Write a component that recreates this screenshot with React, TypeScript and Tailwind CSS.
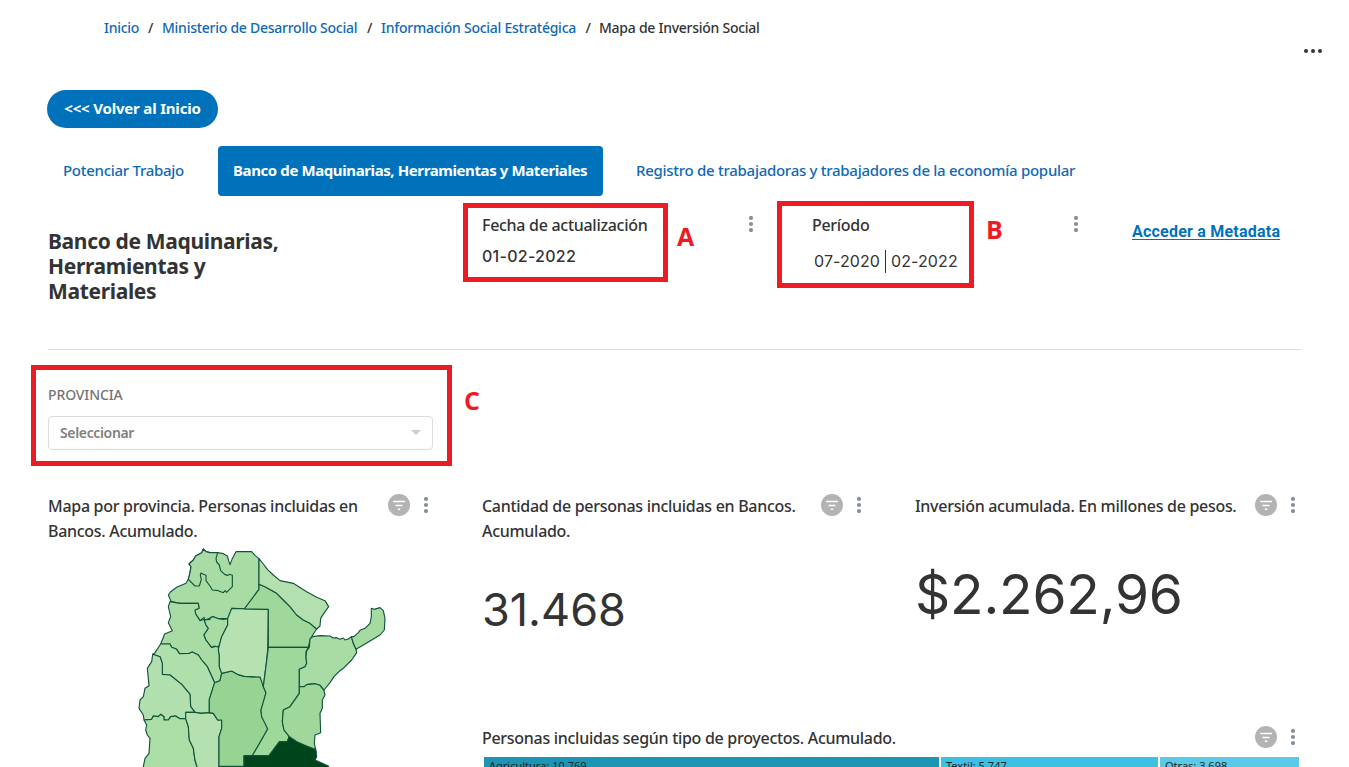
import React from "react";

const Kebab = ({ className = "" }: { className?: string }) => (
  <svg className={`w-[6px] h-4 shrink-0 ${className}`} viewBox="0 0 6 16" fill="#84919a">
    <circle cx="3" cy="2" r="2.1" />
    <circle cx="3" cy="8" r="2.1" />
    <circle cx="3" cy="14" r="2.1" />
  </svg>
);

const Filter = () => (
  <svg className="size-[22px] shrink-0" viewBox="0 0 22 22">
    <circle cx="11" cy="11" r="11" fill="#b3b3b3" />
    <path d="M5 7.5h12M7.5 11.5h7M9.8 15.2h2.4" stroke="#fff" strokeWidth="1.4" />
  </svg>
);

const Tools = () => (
  <div className="flex shrink-0 items-center gap-[13px] h-[22px]">
    <Filter />
    <Kebab />
  </div>
);

const provinces: { fill: string; d: string }[] = [
  { fill: "#a9dca4", d: "M175 118L168 130 140 142 122 155 115 165 119 175 124 185 150 190 205 190 207 205 195 210 197 222 210 242 222 232 225 240 250 230 265 236 293 236 305 205 343 207 387 148 387 56 375 46 365 35 318 35 306 58 300 74 296 62 292 48 280 41 263 38 240 38 228 35 220 27 215 38 197 48 190 60 177 72 183 80 180 98Z" },
  { fill: "#a9dca4", d: "M263 38L258 55 260 66 268 75 272 92 285 104 294 106 298 103 307 106 307 140 295 152 290 157 285 152 280 158 265 152 247 150 240 138 228 122 228 106 220 103 213 99 211 106 214 118 208 138 195 138 175 118 180 98 183 80 177 72 190 60 197 48 215 38 220 27 228 35 240 38Z" },
  { fill: "#a9dca4", d: "M120 185L115 200 122 230 115 248 127 272 104 282 92 312 120 312 125 322 140 328 148 341 178 340 187 336 205 345 215 360 232 380 254 428 270 422 275 400 268 380 268 345 265 330 268 316 245 322 228 300 222 285 235 265 228 255 222 238 210 242 197 222 195 210 207 205 205 190 150 190Z" },
  { fill: "#a9dca4", d: "M222 238L228 255 235 265 222 285 228 300 245 322 254 318 262 321 268 316 275 290 293 255 293 236 280 238 265 236 250 230 242 232 240 238 225 240Z" },
  { fill: "#afdfab", d: "M92 312L75 338 68 343 90 350 97 370 97 403 120 405 155 433 180 463 182 500 195 517 215 520 238 518 238 478 254 428 232 380 215 360 205 345 187 336 178 340 148 341 140 328 125 322 120 312Z" },
  { fill: "#b1dfad", d: "M68 343L65 365 52 385 57 437 45 445 40 470 30 480 27 505 40 525 42 540 65 538 70 528 85 530 92 523 102 530 102 540 115 540 122 530 137 528 150 536 167 536 167 517 195 517 182 500 180 463 155 433 120 405 97 403 97 370 90 350Z" },
  { fill: "#abdda7", d: "M42 540L50 555 47 570 52 585 60 595 57 640 45 655 38 690 204 690 195 660 190 625 178 600 175 560 167 536 150 536 137 528 122 530 115 540 102 540 102 530 92 523 85 530 70 528 65 538Z" },
  { fill: "#b5e1b0", d: "M167 517L195 517 215 520 238 518 250 520 263 540 275 540 275 565 267 590 267 690 204 690 195 660 190 625 178 600 175 560 167 536Z" },
  { fill: "#97d493", d: "M254 428L270 422 275 400 305 393 325 404 343 409 390 411 397 425 400 440 408 458 400 490 393 510 395 530 405 545 413 567 400 590 367 647 342 648 342 679 267 679 267 590 275 565 275 540 263 540 250 520 238 518 238 478Z" },
  { fill: "#b6e2b2", d: "M305 205L415 208 413 330 409 370 400 440 390 411 343 409 325 404 305 393 275 400 268 380 268 345 265 330 268 316 275 290 293 255 293 236Z" },
  { fill: "#9fd89a", d: "M387 133L405 140 440 160 460 180 480 200 500 225 520 240 540 250 560 267 548 285 540 300 535 322 415 322 415 208 343 207 387 148Z" },
  { fill: "#b3e0ae", d: "M387 56L400 72 412 88 430 105 450 122 490 130 530 155 560 172 585 182 596 200 585 215 572 235 570 258 560 267 540 250 520 240 500 225 480 200 460 180 440 160 405 140 387 133Z" },
  { fill: "#9fd89b", d: "M415 322L535 322 528 335 528 350 530 370 525 380 508 388 508 460 480 500 460 510 457 545 462 570 478 590 472 605 450 605 417 647 367 647 400 590 413 567 395 530 393 510 408 458 400 440 409 370Z" },
  { fill: "#a9dca4", d: "M548 290L570 287 600 288 610 294 620 293 630 298 640 294 645 300 655 297 664 290 670 310 678 328 680 338 665 360 640 385 630 392 612 410 600 428 582 450 570 436 555 431 530 434 523 440 508 440 508 388 525 380 530 370 528 350 530 333 538 322 540 297Z" },
  { fill: "#a5daa0", d: "M664 290L672 290 685 278 690 271 705 265 720 250 724 230 724 205 732 208 750 203 760 212 765 235 763 270 750 285 720 303 700 315 678 328 670 310Z" },
  { fill: "#9fd89a", d: "M508 440L523 440 530 434 555 431 570 436 582 452 585 465 577 480 577 505 570 520 572 578 555 585 553 610 557 628 530 620 500 605 478 590 462 570 457 545 460 510 480 500 508 460Z" },
  { fill: "#00441b", d: "M342 647L417 647 448 605 472 605 477 590 500 605 530 618 558 630 560 650 555 660 595 678 600 690 342 690Z" },
];

const ProvinceMap = () => (
  <svg className="ml-[82px] mt-[-4px] h-[227px] w-[262px] shrink-0" viewBox="0 0 786 681">
    <g stroke="#10543a" strokeWidth="3.4" strokeLinejoin="round">
      {provinces.map((p, i) => (
        <path key={i} d={p.d} fill={p.fill} />
      ))}
    </g>
  </svg>
);

const Title = ({ children }: { children: React.ReactNode }) => (
  <h2 className="text-[16px] leading-[25px] font-medium tracking-[-0.29px] whitespace-nowrap">{children}</h2>
);

const letter = "absolute font-['Open_Sans'] text-[25px] leading-[30px] font-bold text-[#ed1c24]";

export default function App() {
  return (
    <div className="relative flex h-[767px] w-[1349px] flex-col overflow-hidden bg-white font-['Noto_Sans','Open_Sans',sans-serif] text-[#333]">
      <nav className="flex h-[40px] shrink-0 pl-[104px] pt-[18px] text-[14px] leading-5 font-medium tracking-[-0.26px] text-[#0f69b4] whitespace-nowrap">
        <a className="w-[35px]">Inicio</a>
        <span className="w-[23px] text-center text-[#333]">/</span>
        <a className="w-[196px]">Ministerio de Desarrollo Social</a>
        <span className="w-[23px] text-center text-[#333]">/</span>
        <a className="w-[196px]">Información Social Estratégica</a>
        <span className="w-[22px] text-center text-[#333]">/</span>
        <span className="text-[#333]">Mapa de Inversión Social</span>
      </nav>
      <div className="flex h-[50px] shrink-0 justify-end pr-[26px] pt-[8px]">
        <svg className="h-[6px] w-[20px]" viewBox="0 0 20 6" fill="#333">
          <circle cx="3" cy="3" r="2" /><circle cx="10" cy="3" r="2" /><circle cx="17" cy="3" r="2" />
        </svg>
      </div>
      <button className="ml-[47px] h-[38px] w-[171px] shrink-0 rounded-full bg-[#0072bc] pb-[2px] text-[15px] font-bold tracking-[-0.18px] text-white whitespace-nowrap">&lt;&lt;&lt; Volver al Inicio</button>
      <div className="mt-[18px] flex h-[50px] shrink-0 items-stretch pl-[63px] text-[15px] leading-[48px] font-medium tracking-[-0.28px] text-[#0f69b4] whitespace-nowrap">
        <a className="w-[155px]">Potenciar Trabajo</a>
        <a className="w-[385px] rounded bg-[#0072bc] pl-[15px] font-bold tracking-[-0.4px] text-white">Banco de Maquinarias, Herramientas y Materiales</a>
        <a className="pl-[33px]">Registro de trabajadoras y trabajadores de la economía popular</a>
      </div>
      <header className="mx-[48px] flex h-[154px] shrink-0 border-b border-[#ddd] pt-[17px]">
        <h1 className="w-[434px] pt-[16px] text-[21px] leading-[25px] font-bold tracking-[-0.34px] whitespace-nowrap">
          Banco de Maquinarias,<br />Herramientas y<br />Materiales
        </h1>
        <div className="w-[266px]">
          <Title>Fecha de actualización</Title>
          <div className="mt-[6px] font-['Inter'] text-[16px] leading-[25px] font-medium tracking-[0.27px]">01-02-2022</div>
        </div>
        <Kebab className="mt-[3px]" />
        <div className="ml-[58px] w-[261px]">
          <Title>Período</Title>
          <div className="mt-[11px] flex h-6 items-center gap-[5px] pl-[2px] font-['Inter'] text-[16px] tracking-[0.1px]">
            <span className="w-[66px] whitespace-nowrap">07-2020</span>
            <span className="h-[23px] w-px bg-[#333]" />
            <span>02-2022</span>
          </div>
        </div>
        <Kebab className="mt-[3px]" />
        <a className="ml-[53px] mt-[6px] font-['Roboto'] text-[16px] leading-[25px] font-bold tracking-[0.22px] text-[#0072bc] underline underline-offset-2 whitespace-nowrap">Acceder a Metadata</a>
      </header>
      <div className="ml-[48px] flex h-[144px] w-[385px] shrink-0 flex-col pt-[35px]">
        <label className="text-[14px] leading-5 font-medium tracking-[-0.12px] text-[#757575]">PROVINCIA</label>
        <div className="mt-[11px] flex h-[34px] items-center justify-between rounded border border-[#ddd] pl-[11px] pr-[11px] pb-px text-[14px] font-semibold tracking-[-0.35px] text-[#808080]">
          <span>Seleccionar</span>
          <svg className="h-[5px] w-[10px]" viewBox="0 0 10 5"><path d="M0 0h10L5 5z" fill="#ccc" /></svg>
        </div>
      </div>
      <main className="flex shrink-0 pl-[48px]">
        <section className="flex w-[434px] flex-col">
          <div className="flex h-[50px] justify-between pr-[53px]">
            <Title>Mapa por provincia. Personas incluidas en<br />Bancos. Acumulado.</Title>
            <Tools />
          </div>
          <ProvinceMap />
        </section>
        <div className="flex w-[819px] flex-col">
          <div className="flex h-[232px]">
            <section className="w-[433px]">
              <div className="flex justify-between pr-[53px]">
                <Title>Cantidad de personas incluidas en Bancos.<br />Acumulado.</Title>
                <Tools />
              </div>
              <div className="mt-[38px] font-['Inter'] text-[45px] leading-[56px]">31.468</div>
            </section>
            <section className="w-[386px]">
              <div className="flex justify-between pr-[5px]">
                <Title>Inversión acumulada. En millones de pesos.</Title>
                <Tools />
              </div>
              <div className="mt-[41px] font-['Inter'] text-[55px] leading-[68px] tracking-[-0.2px]">$2.262,96</div>
            </section>
          </div>
          <section>
            <div className="flex h-[31px] justify-between pr-[5px]">
              <Title>Personas incluidas según tipo de proyectos. Acumulado.</Title>
              <Tools />
            </div>
            <div className="flex h-10 gap-[2px] pl-[2px] text-[11px] leading-4 text-[#222]">
              <div className="w-[455px] bg-[#1c96b4] pl-[5px] pt-px">Agricultura: 10.769</div>
              <div className="w-[217px] bg-[#3dc1e2] pl-[5px] pt-px">Textil: 5.747</div>
              <div className="w-[139px] bg-[#5bcae6] pl-[5px] pt-px">Otras: 3.698</div>
            </div>
          </section>
        </div>
      </main>
      <div className="absolute left-[463px] top-[203px] h-[79px] w-[205px] border-5 border-[#ed1c24]" />
      <div className="absolute left-[777px] top-[201px] h-[87px] w-[197px] border-5 border-[#ed1c24]" />
      <div className="absolute left-[31px] top-[365px] h-[101px] w-[421px] border-5 border-[#ed1c24]" />
      <span className={`${letter} left-[677px] top-[221px]`}>A</span>
      <span className={`${letter} left-[986px] top-[214px]`}>B</span>
      <span className={`${letter} left-[464px] top-[385px]`}>C</span>
    </div>
  );
}
